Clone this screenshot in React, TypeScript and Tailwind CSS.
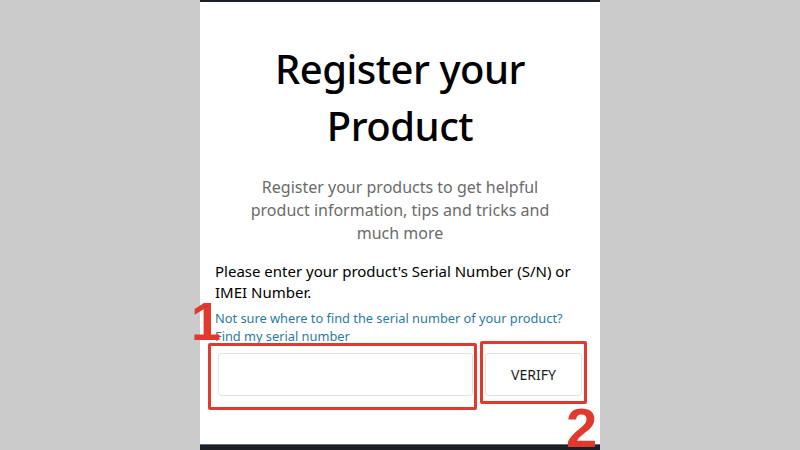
export default function App() {
  return (
    <div className="relative w-[800px] h-[450px] overflow-hidden bg-[#cbcbcb] flex justify-center" style={{ fontFamily: '"Noto Sans", "Open Sans", sans-serif' }}>
      <div className="w-[400px] h-full bg-white flex flex-col">
        <div className="h-[2px] bg-[#1b2026]" />
        <div className="flex-1 px-[15px]">
          <h1 className="mt-[38px] text-center text-[40px] leading-[57px] font-medium text-black tracking-[-0.5px]">
            Register your<br />Product
          </h1>
          <p className="mt-[22px] text-center text-[16px] leading-[23px] text-[#6b6b6b] px-[20px]">
            Register your products to get helpful product information, tips and tricks and much more
          </p>
          <p className="mt-[16px] text-[15px] leading-[21px] text-black">
            Please enter your product's Serial Number (S/N) or IMEI Number.
          </p>
          <div className="mt-[6px] text-[12.8px] leading-[18px] text-[#2a7ba3]">
            <div>Not sure where to find the serial number of your product?</div>
            <div>Find my serial number</div>
          </div>
          <div className="mt-[8px] flex gap-[12px]">
            <div className="w-[255px] h-[43px] ml-[3px] border border-[#e3e3e3] rounded-[3px]" />
            <div className="w-[97px] h-[43px] border border-[#e3e3e3] rounded-[3px] flex items-center justify-center text-[14px] text-[#1a1a1a]">
              VERIFY
            </div>
          </div>
        </div>
        <div className="h-[1px] bg-[#6a6d72]" />
        <div className="h-[5px] bg-[#1b2026]" />
      </div>

      {/* annotations */}
      <div className="absolute left-[208px] top-[343px] w-[269px] h-[67px] border-[3px] border-[#e0392d] rounded-[2px]" />
      <div className="absolute left-[480px] top-[341px] w-[107px] h-[63px] border-[3px] border-[#e0392d] rounded-[2px]" />
      <div className="absolute left-[191px] top-[292px] text-[54px] leading-[58px] font-bold text-[#e0392d]" style={{ fontFamily: '"Liberation Sans", sans-serif' }}>1</div>
      <div className="absolute left-[566px] top-[398px] text-[56px] leading-[60px] font-bold text-[#e0392d]" style={{ fontFamily: '"Liberation Sans", sans-serif' }}>2</div>
    </div>
  );
}
